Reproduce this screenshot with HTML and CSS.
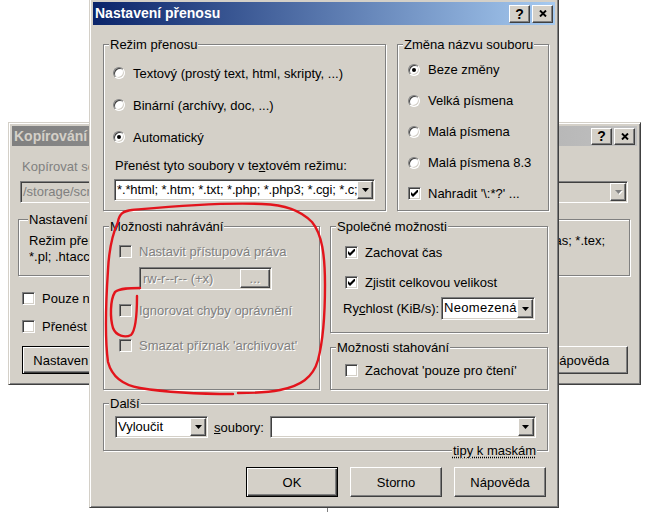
FILE: index.html
```html
<!DOCTYPE html>
<html lang="cs">
<head>
<meta charset="utf-8">
<title>Nastavení přenosu</title>
<link rel="stylesheet" href="styles.css">
</head>
<body>
<div class="window back">
  <div class="titlebar inactive">
    <span class="title">Kopírování</span>
    <span class="capbtn">?</span>
    <span class="capbtn"><svg class="xglyph" viewBox="0 0 8 7" width="8" height="7"><path d="M1 0.5L7 6.5M7 0.5L1 6.5"/></svg></span>
  </div>
  <div class="back-body">
    <div class="dis-plain">Kopírovat soubor 'index.html' do vzdáleného adresáře:</div>
    <div class="combo field off back-combo">
      <span class="combo-text dis-plain">/storage/scripts/</span>
      <span class="drop raised"><svg class="arrow dim" viewBox="0 0 7 4" width="7" height="4"><path d="M0 0h7l-3.5 4z"/></svg></span>
    </div>
    <div class="group back-group">
      <span class="group-label">Nastavení přenosu</span>
      <div class="back-line"><span>Režim přenosu: Automatický (*.*html; *.htm; *.txt;</span><span class="tail">*.pas; *.tex;</span></div>
      <div class="back-line">*.pl; .htaccess; *.xml)</div>
    </div>
    <label class="opt chk back-check1"><span class="checkbox"></span>Pouze nové a aktualizované soubory</label>
    <label class="opt chk back-check2"><span class="checkbox"></span>Přenést na pozadí (přidat do fronty)</label>
    <div class="back-buttons">
      <button class="btn raised default back-btn">Nastavení...</button>
      <button class="btn raised back-help">Nápověda</button>
    </div>
  </div>
</div>

<div class="edge-tick"></div>

<div class="window front">
  <div class="titlebar active">
    <span class="title">Nastavení přenosu</span>
    <span class="capbtn">?</span>
    <span class="capbtn"><svg class="xglyph" viewBox="0 0 8 7" width="8" height="7"><path d="M1 0.5L7 6.5M7 0.5L1 6.5"/></svg></span>
  </div>
  <div class="front-body">
    <div class="row1">
      <div class="group g-mode">
        <span class="group-label">Režim přenosu</span>
        <label class="opt rad mode-opt"><span class="radio"></span>Textový (prostý text, html, skripty, ...)</label>
        <label class="opt rad mode-opt"><span class="radio"></span>Binární (archívy, doc, ...)</label>
        <label class="opt rad mode-opt"><span class="radio on"></span>Automatický</label>
        <div class="mask-label">Přenést tyto soubory v te<u>x</u>tovém režimu:</div>
        <div class="combo field mask-combo">
          <span class="combo-text tight">*.*html; *.htm; *.txt; *.php; *.php3; *.cgi; *.c;</span>
          <span class="drop raised"><svg class="arrow" viewBox="0 0 7 4" width="7" height="4"><path d="M0 0h7l-3.5 4z"/></svg></span>
        </div>
      </div>
      <div class="group g-rename">
        <span class="group-label">Změna názvu souboru</span>
        <label class="opt rad ren-opt"><span class="radio on"></span>Beze změny</label>
        <label class="opt rad ren-opt"><span class="radio"></span>Velká písmena</label>
        <label class="opt rad ren-opt"><span class="radio"></span>Malá písmena</label>
        <label class="opt rad ren-opt"><span class="radio"></span>Malá písmena 8.3</label>
        <label class="opt chk ren-opt"><span class="checkbox"><svg class="tick" viewBox="0 0 7 7" width="7" height="7"><path d="M0 2L2 4L6 0H7V2L2 7L0 5Z"/></svg></span>Nahradit '\:*?' ...</label>
      </div>
    </div>

    <div class="row2">
      <div class="group g-upload">
        <span class="group-label">Možnosti nahrávání</span>
        <label class="opt chk up-row dis"><span class="checkbox off"></span>Nastavit přístupová práva</label>
        <div class="field off perm-edit">
          <span class="perm-text dis">rw-r--r-- (+x)</span>
          <span class="perm-btn raised dis">...</span>
        </div>
        <label class="opt chk up-row up-ignore dis"><span class="checkbox off"></span>Ignorovat chyby oprávnění</label>
        <label class="opt chk up-row up-clear dis"><span class="checkbox off"></span>Smazat příznak 'archivovat'</label>
      </div>
      <div class="col-right">
        <div class="group g-common">
          <span class="group-label">Společné možnosti</span>
          <label class="opt chk cm-row"><span class="checkbox"><svg class="tick" viewBox="0 0 7 7" width="7" height="7"><path d="M0 2L2 4L6 0H7V2L2 7L0 5Z"/></svg></span>Zachovat čas</label>
          <label class="opt chk cm-row cm-second"><span class="checkbox"><svg class="tick" viewBox="0 0 7 7" width="7" height="7"><path d="M0 2L2 4L6 0H7V2L2 7L0 5Z"/></svg></span>Zjistit celkovou velikost</label>
          <div class="speed-row">
            <span class="speed-label">Ry<u>c</u>hlost (KiB/s):</span>
            <div class="combo field speed-combo">
              <span class="combo-text wide">Neomezená</span>
              <span class="drop raised"><svg class="arrow" viewBox="0 0 7 4" width="7" height="4"><path d="M0 0h7l-3.5 4z"/></svg></span>
            </div>
          </div>
        </div>
        <div class="group g-download">
          <span class="group-label">Možnosti stahování</span>
          <label class="opt chk cm-row"><span class="checkbox"></span>Zachovat 'pouze pro čtení'</label>
        </div>
      </div>
    </div>

    <div class="group g-other">
      <span class="group-label">Další</span>
      <div class="other-row">
        <div class="combo field filter-combo">
          <span class="combo-text">Vyloučit</span>
          <span class="drop raised"><svg class="arrow" viewBox="0 0 7 4" width="7" height="4"><path d="M0 0h7l-3.5 4z"/></svg></span>
        </div>
        <span class="files-label"><u>s</u>oubory:</span>
        <div class="combo field files-combo">
          <span class="combo-text"></span>
          <span class="drop raised"><svg class="arrow" viewBox="0 0 7 4" width="7" height="4"><path d="M0 0h7l-3.5 4z"/></svg></span>
        </div>
      </div>
      <span class="hint-link">tipy k maskám</span>
    </div>

    <div class="buttons">
      <button class="btn raised default">OK</button>
      <button class="btn raised">Storno</button>
      <button class="btn raised">Nápověda</button>
    </div>
  </div>
</div>

<svg class="ink" width="645" height="512" viewBox="0 0 645 512">
  <path d="M118 222C119 214 123 211 132 210C165 207 215 202 262 204C285 205 300 210 312 222C322 234 325 255 325 285C325 320 322 345 318 360C313 378 300 386 280 390C265 393 250 393 238 393"/>
  <path d="M233 394C205 394 165 392 140 388C122 385 112 377 108 362C105 340 106 300 108 270C109 250 112 235 118 222"/>
  <path d="M140 288C130 288 120 288 115 292C110 300 110 318 113 328C116 336 125 338 131 335C136 330 137 315 137 296"/>
</svg>
</body>
</html>
```

FILE: styles.css
```css
* { box-sizing: border-box; margin: 0; padding: 0; }
html, body { width: 645px; height: 512px; }
body {
  position: relative;
  overflow: hidden;
  background: #fff;
  font-family: "Liberation Sans", Arial, sans-serif;
  font-size: 13px;
  line-height: 15px;
  color: #000;
}
u { text-underline-offset: 1px; }

/* ---------- windows ---------- */
.window {
  position: absolute;
  display: flex;
  flex-direction: column;
  background: #d4d0c8;
  border: 1px solid;
  border-color: #d4d0c8 #404040 #404040 #d4d0c8;
  box-shadow: inset 1px 1px 0 #fff, inset -1px -1px 0 #808080;
  padding: 3px;
}
.back { left: 8px; top: 122px; width: 633px; height: 263px; }
.front { left: 89px; top: -2px; width: 470px; height: 510px; }

.titlebar {
  flex: none;
  display: flex;
  align-items: center;
  gap: 2px;
  padding: 0 2px;
  font-weight: bold;
  font-size: 14px;
  white-space: nowrap;
}
.titlebar.active { height: 23px; color: #fff; background: linear-gradient(to right, #0a246a, #a6caf0); }
.titlebar.inactive { height: 20px; color: #d4d0c8; background: linear-gradient(to right, #808080, #c0c0c0); }
.title { flex: 1; }
.capbtn {
  width: 21px;
  height: 18px;
  display: flex;
  align-items: center;
  justify-content: center;
  background: #d4d0c8;
  border: 1px solid;
  border-color: #fff #404040 #404040 #fff;
  box-shadow: inset -1px -1px 0 #808080;
  color: #000;
  font-size: 14px;
  font-weight: bold;
  line-height: 14px;
}
.inactive .capbtn { height: 17px; }
.xglyph path { stroke: #000; stroke-width: 1.9; fill: none; }

/* ---------- primitives ---------- */
.raised {
  background: #d4d0c8;
  border: 1px solid;
  border-color: #fff #404040 #404040 #fff;
  box-shadow: inset -1px -1px 0 #808080;
}
.field {
  background: #fff;
  border: 1px solid;
  border-color: #808080 #fff #fff #808080;
  box-shadow: inset 1px 1px 0 #404040, inset -1px -1px 0 #d4d0c8;
  padding: 1px;
}
.field.off { background: #d4d0c8; }

.group {
  position: relative;
  flex: none;
  border: 1px solid #808080;
  box-shadow: 1px 1px 0 #fff, inset 1px 1px 0 #fff;
}
.group-label {
  position: absolute;
  top: -8px;
  left: 5px;
  padding: 0 1px;
  background: #d4d0c8;
  line-height: 15px;
  white-space: nowrap;
}

.opt { display: flex; align-items: center; white-space: nowrap; }
.opt.rad { gap: 8px; }
.opt.chk { gap: 7px; }

.radio {
  position: relative;
  flex: none;
  width: 12px;
  height: 12px;
  border-radius: 50%;
  background: #fff;
  border: 1px solid;
  border-color: #808080 #fff #fff #808080;
  box-shadow: inset 1px 1px 0 #404040, inset -1px -1px 0 #d4d0c8;
}
.radio.on::after {
  content: "";
  position: absolute;
  left: 3px;
  top: 3px;
  width: 4px;
  height: 4px;
  border-radius: 50%;
  background: #000;
}
.checkbox {
  flex: none;
  width: 13px;
  height: 13px;
  display: flex;
  align-items: center;
  justify-content: center;
  background: #fff;
  border: 1px solid;
  border-color: #808080 #fff #fff #808080;
  box-shadow: inset 1px 1px 0 #404040, inset -1px -1px 0 #d4d0c8;
}
.checkbox.off { background: #d4d0c8; }
.tick { display: block; }
.tick path { fill: #000; }

.dis { color: #808080; text-shadow: 1px 1px 0 #fff; }
.dis-plain { color: #808080; }

.combo { display: flex; height: 22px; }
.combo-text {
  flex: 1;
  min-width: 0;
  overflow: hidden;
  white-space: nowrap;
  padding: 1px 0 0 1px;
  line-height: 16px;
}
.combo-text.tight { letter-spacing: -0.12px; }
.combo-text.wide { letter-spacing: 0.3px; }
.drop {
  flex: none;
  width: 16px;
  display: flex;
  align-items: center;
  justify-content: center;
}
.arrow { display: block; }
.arrow path { fill: #000; }
.arrow.dim path { fill: #808080; }
.arrow.dim { filter: drop-shadow(1px 1px 0 #fff); }

.btn {
  font: inherit;
  color: #000;
  width: 92px;
  height: 30px;
  text-align: center;
}
.btn.default {
  border: 1px solid #000;
  box-shadow: inset 1px 1px 0 #fff, inset -1px -1px 0 #404040, inset -2px -2px 0 #808080;
}

/* ---------- back window ---------- */
.back-body { display: flex; flex-direction: column; padding: 13px 0 0 10px; }
.back-combo { width: 608px; margin: 7px 0 0 -2px; }
.back-group { width: 612px; height: 57px; margin: 16px 0 0 -4px; padding: 13px 24px 0 10px; }
.back-group .group-label { left: 9px; }
.back-line { display: flex; white-space: nowrap; line-height: 16px; overflow: hidden; }
.back-line .tail { margin-left: auto; }
.back-check1 { margin-top: 12px; height: 20px; }
.back-check2 { margin-top: 8px; height: 20px; }
.back-buttons { display: flex; justify-content: space-between; margin-top: 10px; padding-right: 9px; }
.back-btn { height: 28px; width: 92px; }
.back-help { height: 28px; width: 97px; }

.edge-tick { position: absolute; left: 327px; top: 508px; width: 1px; height: 4px; background: #808080; }

/* ---------- front window ---------- */
.front-body { display: flex; flex-direction: column; padding: 19px 7px 0 10px; }

.row1 { display: flex; gap: 11px; }
.g-mode { width: 283px; height: 167px; padding: 12px 0 0 9px; }
.mode-opt { height: 32px; }
.mask-label { margin: 5px 0 0 2px; white-space: nowrap; }
.mask-combo { width: 261px; margin: 6px 0 0 1px; }

.g-rename { width: 152px; height: 167px; padding: 9px 0 0 10px; }
.ren-opt { height: 31px; }

.row2 { display: flex; gap: 10px; margin-top: 15px; }
.g-upload { width: 217px; height: 164px; padding: 14px 0 0 15px; }
.up-row { height: 20px; }
.perm-edit { display: flex; width: 133px; height: 23px; margin: 6px 0 0 20px; }
.perm-text { flex: 1; padding: 2px 0 0 2px; line-height: 16px; white-space: nowrap; overflow: hidden; }
.perm-btn { flex: none; width: 30px; display: flex; align-items: center; justify-content: center; line-height: 12px; }
.up-ignore { margin-top: 10px; }
.up-clear { margin-top: 15px; }

.col-right { display: flex; flex-direction: column; gap: 14px; }
.g-common { width: 218px; height: 107px; padding: 15px 0 0 14px; }
.cm-row { height: 20px; }
.cm-second { margin-top: 10px; }
.speed-row { display: flex; align-items: center; gap: 2px; margin: 5px 0 0 -2px; }
.speed-label { white-space: nowrap; }
.speed-combo { width: 94px; height: 23px; }
.g-download { width: 218px; height: 43px; padding: 12px 0 0 14px; }

.g-other { width: 445px; height: 48px; margin-top: 13px; padding: 12px 0 0 11px; }
.other-row { display: flex; align-items: center; }
.filter-combo { width: 93px; }
.files-label { margin: 0 6px; white-space: nowrap; }
.files-combo { width: 266px; }
.hint-link {
  position: absolute;
  right: 10px;
  bottom: -8px;
  padding: 0 1px;
  background: #d4d0c8;
  line-height: 15px;
  white-space: nowrap;
  text-decoration: underline dotted;
  text-underline-offset: 2px;
}

.buttons { display: flex; justify-content: flex-end; gap: 12px; margin-top: 16px; padding-right: 2px; }

/* ---------- annotation ---------- */
.ink { position: absolute; left: 0; top: 0; pointer-events: none; }
.ink path { fill: none; stroke: #e3141c; stroke-width: 2.4; stroke-linecap: round; stroke-linejoin: round; }
```
